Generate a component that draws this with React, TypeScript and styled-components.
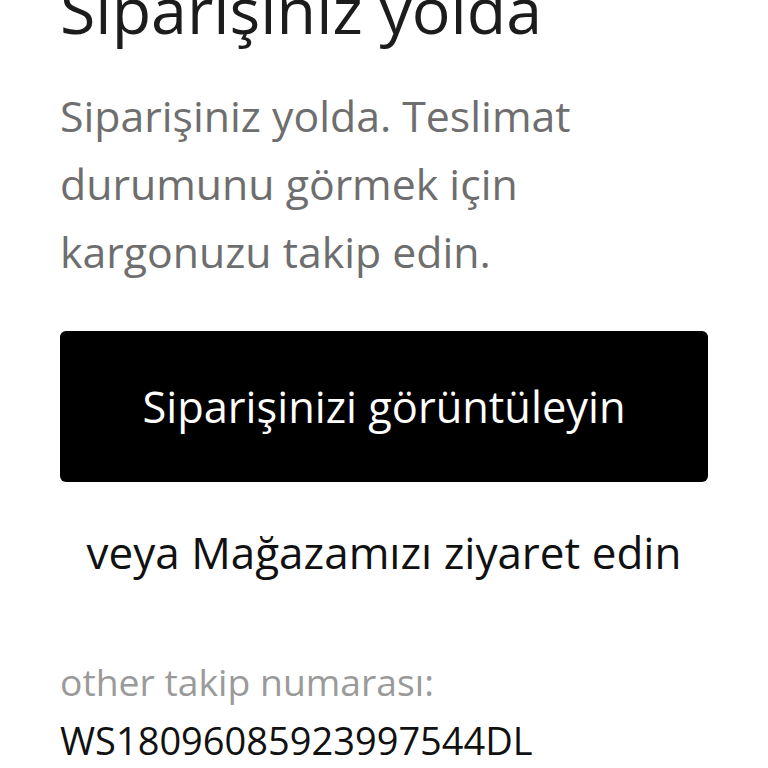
import React from "react";
import styled, { createGlobalStyle } from "styled-components";

const Global = createGlobalStyle`
  html, body { margin: 0; padding: 0; background: #ffffff; }
  body { font-family: "Open Sans", "Noto Sans", sans-serif; overflow: hidden; }
`;

const Page = styled.div`
  width: 768px;
  height: 768px;
  overflow: hidden;
  background: #fff;
`;

const Content = styled.div`
  display: flex;
  flex-direction: column;
  padding: 0 60px;
  margin-top: -31px;
`;

const Title = styled.h1`
  margin: 0;
  font-size: 64.5px;
  font-weight: 400;
  line-height: 81.6px;
  color: #1c1c1c;
`;

const Lead = styled.p`
  margin: 31px 0 0;
  font-size: 42.8px;
  line-height: 68px;
  color: #6e6e6e;
`;

const Button = styled.a`
  margin-top: 45px;
  height: 151px;
  display: flex;
  align-items: center;
  justify-content: center;
  background: #000;
  color: #fff;
  border-radius: 6px;
  font-size: 43.4px;
  text-decoration: none;
`;

const Alt = styled.div`
  margin-top: 40px;
  text-align: center;
  font-size: 44px;
  line-height: 60px;
  color: #111;
`;

const Label = styled.div<{ $muted?: boolean }>`
  font-size: ${(p) => (p.$muted ? "37.3px" : "38px")};
  line-height: 58px;
  color: ${(p) => (p.$muted ? "#9a9a9a" : "#111")};
`;

const Tracking = styled.div`
  margin-top: 71px;
  display: flex;
  flex-direction: column;
`;

export default function App() {
  return (
    <Page>
      <Global />
      <Content>
        <Title>Siparişiniz yolda</Title>
        <Lead>Siparişiniz yolda. Teslimat durumunu görmek için kargonuzu takip edin.</Lead>
        <Button href="#">Siparişinizi görüntüleyin</Button>
        <Alt>veya Mağazamızı ziyaret edin</Alt>
        <Tracking>
          <Label $muted>other takip numarası:</Label>
          <Label>WS18096085923997544DL</Label>
        </Tracking>
      </Content>
    </Page>
  );
}
